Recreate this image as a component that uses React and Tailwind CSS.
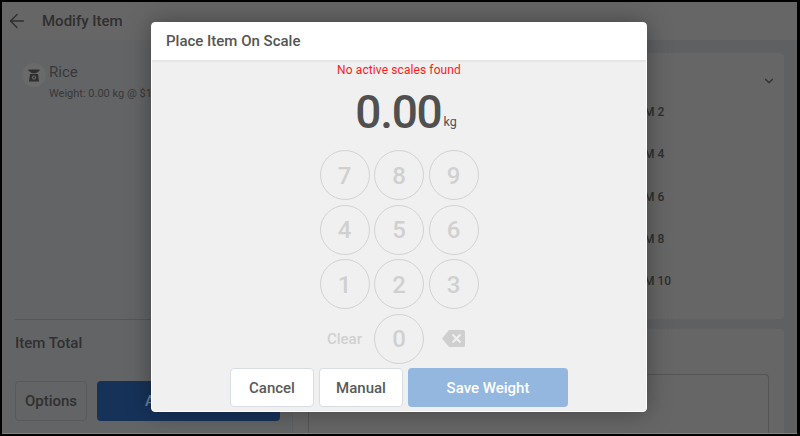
import { ArrowLeft, ChevronDown } from 'lucide-react'

const keys = ['7', '8', '9', '4', '5', '6', '1', '2', '3']

function ScaleIcon() {
  return (
    <svg width="12" height="13" viewBox="0 0 12 13" fill="#2f2f2f">
      <path d="M.5.5h11v1.2L8 4.300H4L.5 1.700z" />
      <path d="M2 5h8l1 7.500H1z" />
      <circle cx="6" cy="8.600" r="2.100" fill="#6a6a6a" />
      <circle cx="6" cy="8.600" r="1" fill="#2f2f2f" />
    </svg>
  )
}

function BackspaceIcon() {
  return (
    <svg width="23" height="17" viewBox="0 0 23 17">
      <path d="M7 0h14.500a1.500 1.500 0 0 1 1.500 1.500v14a1.500 1.500 0 0 1-1.500 1.500H7L0 8.500z" fill="#cfcfcf" />
      <path d="M10.500 4.500l8 8m0-8l-8 8" stroke="#f0f0f0" strokeWidth="2" />
    </svg>
  )
}

function Key({ label }) {
  return (
    <button className="flex h-[50px] w-[50px] items-center justify-center rounded-full border border-[#d2d2d2] pt-px text-2xl font-medium text-[#d0d0d0]">
      {label}
    </button>
  )
}

function OptionRow({ label }) {
  return (
    <div className="flex h-[38px] items-start justify-end rounded-sm bg-[#666666] pt-1.5">
      <span className="w-[125px] text-xs leading-4 font-medium text-[#2e2e2e]">{label}</span>
    </div>
  )
}

function ScaleDialog() {
  return (
    <div className="absolute top-[22px] left-[151px] flex h-[390px] w-[496px] flex-col overflow-hidden rounded-sm border border-white bg-[#f0f0f0] shadow-[0_0_24px_rgba(0,0,0,0.35)]">
      <div className="flex h-[39px] shrink-0 items-center border-b-2 border-[#e6e6e6] bg-white px-[14px] text-[15px] font-medium text-[#555555]">
        Place Item On Scale
      </div>
      <p className="mt-px text-center text-xs leading-[15px] tracking-[0.1px] text-[#ff1a1a]">No active scales found</p>
      <div className="mt-[6px] flex items-end justify-center pl-[14px] text-[#505050]">
        <span className="text-[46px] leading-[56px] font-medium tracking-[-1.250px]">0.00</span>
        <span className="mb-[8px] ml-[2px] text-[12.500px]">kg</span>
      </div>
      <div className="mx-auto mt-[10px] grid w-[159px] grid-cols-3 gap-[4.500px]">
        {keys.map((k) => <Key key={k} label={k} />)}
        <button className="pt-px text-[15px] font-medium text-[#d0d0d0]">Clear</button>
        <Key label="0" />
        <div className="flex items-center justify-center pr-px"><BackspaceIcon /></div>
      </div>
      <div className="mt-[4px] flex justify-center gap-[5px]">
        <button className="h-[39px] w-[84px] rounded-sm border border-[#d8dde3] bg-white pt-[3px] text-[15px] font-medium text-[#5a5a5a]">Cancel</button>
        <button className="h-[39px] w-[84px] rounded-sm border border-[#d8dde3] bg-white pt-[3px] text-[15px] font-medium text-[#5a5a5a]">Manual</button>
        <button className="h-[39px] w-[160px] rounded-sm bg-[#94b7e0] pt-[3px] text-[15px] font-medium text-white">Save Weight</button>
      </div>
    </div>
  )
}

export default function App() {
  return (
    <div className="relative h-[436px] w-[800px] overflow-hidden bg-black py-[2px] pr-[3px] pl-[2px] font-[Roboto,sans-serif]">
      <div className="flex h-full flex-col border-b border-[#7d8094] bg-[#5f6062]">
        <header className="flex h-[38px] shrink-0 items-center gap-[14px] bg-[#666666] pl-[4px] text-[#2f2f2f]">
          <ArrowLeft size={22} strokeWidth={1.5} />
          <span className="text-[15px] font-medium">Modify Item</span>
        </header>
        <div className="flex min-h-0 flex-1">
          <section className="flex w-[290px] shrink-0 flex-col bg-[#636465] pt-[23px] pr-3 pb-[12px] pl-[13px]">
            <div className="flex gap-[3px] pl-[7px]">
              <div className="flex h-6 w-6 items-center justify-center rounded-full bg-[#6a6a6a]"><ScaleIcon /></div>
              <div className="text-[#383838]">
                <p className="text-[15px] leading-[18px]">Rice</p>
                <p className="mt-[5px] text-[11px] whitespace-nowrap">Weight: 0.00 kg @ $1</p>
              </div>
            </div>
            <div className="mt-auto border-t border-[#565656] pt-[12px]">
              <p className="text-[15px] font-medium text-[#303030]">Item Total</p>
              <div className="mt-[27px] flex gap-[10px]">
                <button className="h-10 w-[72px] rounded-sm border border-[#5a5a5a] text-[15px] font-medium text-[#303030]">Options</button>
                <button className="h-10 flex-1 rounded-sm bg-[#163259] pl-[48px] text-left text-[15px] font-medium text-[#6d7f99]">Add</button>
              </div>
            </div>
          </section>
          <main className="flex flex-1 flex-col gap-[10px] pt-[13px] pr-[13px] pl-px">
            <div className="rounded-sm bg-[#666666] px-[15px] pt-[21px] pb-[14px]">
              <div className="flex justify-end pb-[10px] text-[#2f2f2f]"><ChevronDown size={14} className="-mr-[7px]" /></div>
              <div className="flex flex-col gap-[4.250px]">
                {['M 2', 'M 4', 'M 6', 'M 8', 'M 10'].map((l) => <OptionRow key={l} label={l} />)}
              </div>
            </div>
            <div className="flex-1 rounded-t-sm bg-[#666666] px-[15px] pt-[45px]">
              <div className="h-full rounded-t-sm border border-b-0 border-[#555555]" />
            </div>
          </main>
        </div>
      </div>
      <ScaleDialog />
    </div>
  )
}
